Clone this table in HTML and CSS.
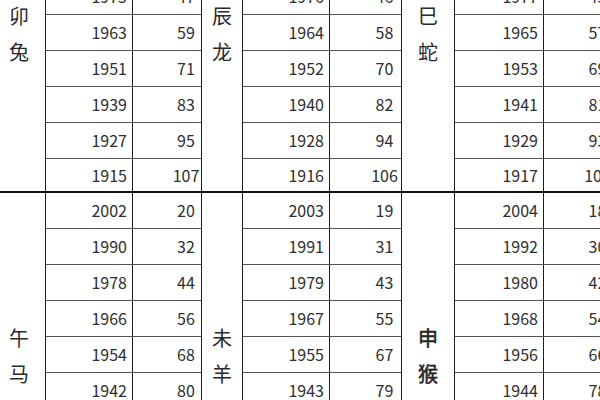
FILE: index.html
```html
<!DOCTYPE html>
<html lang="zh">
<head>
<meta charset="utf-8">
<link rel="stylesheet" href="styles.css">
</head>
<body>
<div class="viewport">
<table class="zodiac">
<colgroup>
<col class="c-label1"><col class="c-year1"><col class="c-age1">
<col class="c-label2"><col class="c-year2"><col class="c-age2">
<col class="c-label3"><col class="c-year3"><col class="c-age3">
</colgroup>
<tbody class="group">
<tr><td class="label" rowspan="9"><span>卯</span><span>兔</span></td><td class="year">2011</td><td class="age">11</td><td class="label" rowspan="9"><span>辰</span><span>龙</span></td><td class="year">2012</td><td class="age">10</td><td class="label" rowspan="9"><span>巳</span><span>蛇</span></td><td class="year">2013</td><td class="age">9</td></tr>
<tr><td class="year">1999</td><td class="age">23</td><td class="year">2000</td><td class="age">22</td><td class="year">2001</td><td class="age">21</td></tr>
<tr><td class="year">1987</td><td class="age">35</td><td class="year">1988</td><td class="age">34</td><td class="year">1989</td><td class="age">33</td></tr>
<tr><td class="year">1975</td><td class="age">47</td><td class="year">1976</td><td class="age">46</td><td class="year">1977</td><td class="age">45</td></tr>
<tr><td class="year">1963</td><td class="age">59</td><td class="year">1964</td><td class="age">58</td><td class="year">1965</td><td class="age">57</td></tr>
<tr><td class="year">1951</td><td class="age">71</td><td class="year">1952</td><td class="age">70</td><td class="year">1953</td><td class="age">69</td></tr>
<tr><td class="year">1939</td><td class="age">83</td><td class="year">1940</td><td class="age">82</td><td class="year">1941</td><td class="age">81</td></tr>
<tr><td class="year">1927</td><td class="age">95</td><td class="year">1928</td><td class="age">94</td><td class="year">1929</td><td class="age">93</td></tr>
<tr class="last"><td class="year">1915</td><td class="age">107</td><td class="year">1916</td><td class="age">106</td><td class="year">1917</td><td class="age">105</td></tr>
</tbody>
<tbody class="group">
<tr><td class="label" rowspan="9"><span>午</span><span>马</span></td><td class="year">2002</td><td class="age">20</td><td class="label" rowspan="9"><span>未</span><span>羊</span></td><td class="year">2003</td><td class="age">19</td><td class="label heavy" rowspan="9"><span>申</span><span>猴</span></td><td class="year">2004</td><td class="age">18</td></tr>
<tr><td class="year">1990</td><td class="age">32</td><td class="year">1991</td><td class="age">31</td><td class="year">1992</td><td class="age">30</td></tr>
<tr><td class="year">1978</td><td class="age">44</td><td class="year">1979</td><td class="age">43</td><td class="year">1980</td><td class="age">42</td></tr>
<tr><td class="year">1966</td><td class="age">56</td><td class="year">1967</td><td class="age">55</td><td class="year">1968</td><td class="age">54</td></tr>
<tr><td class="year">1954</td><td class="age">68</td><td class="year">1955</td><td class="age">67</td><td class="year">1956</td><td class="age">66</td></tr>
<tr><td class="year">1942</td><td class="age">80</td><td class="year">1943</td><td class="age">79</td><td class="year">1944</td><td class="age">78</td></tr>
<tr><td class="year">1930</td><td class="age">92</td><td class="year">1931</td><td class="age">91</td><td class="year">1932</td><td class="age">90</td></tr>
<tr><td class="year">1918</td><td class="age">104</td><td class="year">1919</td><td class="age">103</td><td class="year">1920</td><td class="age">102</td></tr>
<tr class="last"><td class="year">1906</td><td class="age">116</td><td class="year">1907</td><td class="age">115</td><td class="year">1908</td><td class="age">114</td></tr>
</tbody>
</table>
</div>
</body>
</html>
```
FILE: styles.css
```css
html, body {
  margin: 0;
  padding: 0;
  background: #fff;
}
body {
  width: 600px;
  height: 400px;
  overflow: hidden;
  font-family: "Noto Sans CJK SC", "Noto Sans", sans-serif;
  color: #2e2e2e;
}
.viewport {
  width: 600px;
  height: 400px;
  overflow: hidden;
}
.zodiac {
  border-collapse: collapse;
  table-layout: fixed;
  width: 621px;
  margin-top: -131px;
  margin-left: -8px;
}
.c-label1 { width: 53px; }
.c-year1 { width: 87px; }
.c-age1 { width: 69px; }
.c-label2 { width: 41px; }
.c-year2 { width: 87px; }
.c-age2 { width: 72px; }
.c-label3 { width: 53px; }
.c-year3 { width: 89px; }
.c-age3 { width: 70px; }
.zodiac td {
  height: 36px;
  padding: 0;
  box-sizing: border-box;
  border-left: 1px solid #1e1e1e;
  border-right: 1px solid #1e1e1e;
  border-top: 1px solid #555;
  border-bottom: 1px solid #555;
  font-size: 16px;
  line-height: 20px;
  vertical-align: middle;
  white-space: nowrap;
}
.zodiac tr.last td {
  height: 34px;
}
.zodiac tbody.group tr:first-child td {
  border-top: 2px solid #111;
}
.zodiac tr.last td {
  border-bottom: 2px solid #111;
}
.zodiac td.label {
  border-top: 2px solid #111;
  border-bottom: 2px solid #111;
  text-align: center;
  font-size: 20px;
  color: #2a2a2a;
  padding-top: 6px;
}
.label span {
  display: block;
  line-height: 36px;
}
.label.heavy {
  color: #151515;
  -webkit-text-stroke: 0.5px #151515;
}
.year {
  text-align: right;
  padding-right: 5px !important;
}
.age {
  text-align: center;
  padding-left: 38px !important;
}
```
